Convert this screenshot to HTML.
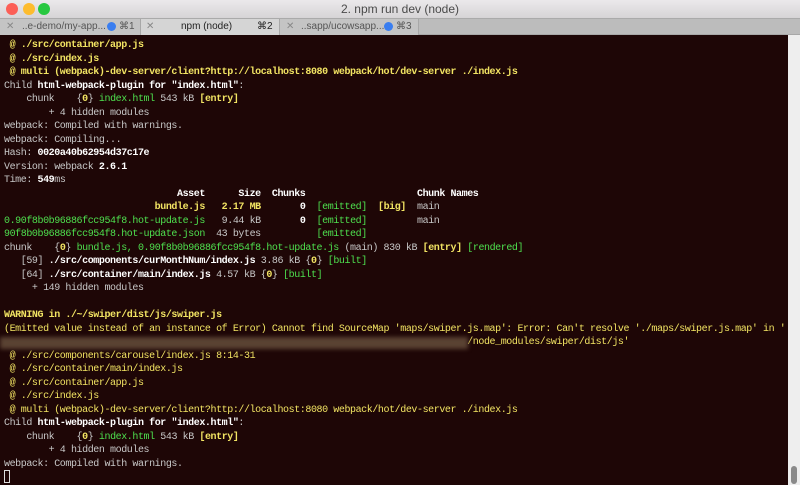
<!DOCTYPE html>
<html><head><meta charset="utf-8"><style>
*{margin:0;padding:0;box-sizing:border-box}
body{width:800px;height:485px;overflow:hidden;background:#1e0606;position:relative;font-family:"Liberation Sans",sans-serif}
#title{position:absolute;left:0;top:0;width:800px;height:18px;background:linear-gradient(#ebe9eb,#d6d4d6);text-align:center;font-size:12px;line-height:18px;color:#4a4a4a}
.tl{position:absolute;top:3px;width:12px;height:12px;border-radius:50%}
#tabs{position:absolute;left:0;top:18px;width:800px;height:17px;background:#bcbcbc;border-top:1px solid #aaa;border-bottom:1px solid #a8a8a8}
.tab{position:absolute;top:0;height:16px;font-size:10px;line-height:15px;color:#555;border-right:1px solid #a8a8a8;background:#c4c4c4}
.tab span{position:absolute;top:0}
.dot{display:inline-block;width:9px;height:9px;border-radius:50%;background:#3a7ef0;position:absolute;top:3px}
pre{position:absolute;left:4px;top:39px;font-family:"Liberation Mono",monospace;font-size:10px;letter-spacing:-0.42px;line-height:13.5px;color:#c8c8c8;white-space:pre}
.y{color:#f2e463}.yb{color:#f2e463;font-weight:bold}.g{color:#4ee04e}.w{color:#fff;font-weight:bold}
#blur{position:absolute;left:0;top:337px;width:468px;height:12px;background:#5a4232;filter:blur(2px)}
#sb{position:absolute;left:788px;top:35px;width:12px;height:450px;background:#eeeeee}
#thumb{position:absolute;left:791px;top:466px;width:6px;height:18px;border-radius:3px;background:#8a8a8a}
#cur{position:absolute;left:4px;top:470px;width:6px;height:13px;border:1px solid #ddd}
</style></head><body>
<div id="title">2. npm run dev (node)
<div class="tl" style="left:6px;background:#fc5f57"></div>
<div class="tl" style="left:23px;background:#fdbc2e"></div>
<div class="tl" style="left:38px;background:#28c840"></div>
</div>
<div id="tabs">
<div class="tab" style="left:0;width:141px"><span style="left:6px;color:#888">✕</span><span style="left:22px">..e-demo/my-app...</span><i class="dot" style="left:107px"></i><span style="left:119px">⌘1</span></div>
<div class="tab" style="left:141px;width:139px;background:#d5d5d5"><span style="left:5px;color:#888">✕</span><span style="left:40px;color:#222">npm (node)</span><span style="left:116px;color:#222">⌘2</span></div>
<div class="tab" style="left:280px;width:139px"><span style="left:6px;color:#888">✕</span><span style="left:21px">..sapp/ucowsapp...</span><i class="dot" style="left:104px"></i><span style="left:116px">⌘3</span></div>
</div>
<pre><span class="yb"> @ ./src/container/app.js
 @ ./src/index.js
 @ multi (webpack)-dev-server/client?http://localhost:8080 webpack/hot/dev-server ./index.js</span>
Child <span class="w">html-webpack-plugin for "index.html"</span>:
    chunk    {<span class="yb">0</span>} <span class="g">index.html</span> 543 kB <span class="yb">[entry]</span>
        + 4 hidden modules
webpack: Compiled with warnings.
webpack: Compiling...
Hash: <span class="w">0020a40b62954d37c17e</span>
Version: webpack <span class="w">2.6.1</span>
Time: <span class="w">549</span>ms
<span class="w">                               Asset      Size  Chunks                    Chunk Names</span>
<span class="yb">                           bundle.js   2.17 MB</span>       <span class="w">0</span>  <span class="g">[emitted]</span>  <span class="yb">[big]</span>  main
<span class="g">0.90f8b0b96886fcc954f8.hot-update.js</span>   9.44 kB       <span class="w">0</span>  <span class="g">[emitted]</span>         main
<span class="g">90f8b0b96886fcc954f8.hot-update.json</span>  43 bytes          <span class="g">[emitted]</span>
chunk    {<span class="yb">0</span>} <span class="g">bundle.js, 0.90f8b0b96886fcc954f8.hot-update.js</span> (main) 830 kB <span class="yb">[entry]</span> <span class="g">[rendered]</span>
   [59] <span class="w">./src/components/curMonthNum/index.js</span> 3.86 kB {<span class="yb">0</span>} <span class="g">[built]</span>
   [64] <span class="w">./src/container/main/index.js</span> 4.57 kB {<span class="yb">0</span>} <span class="g">[built]</span>
     + 149 hidden modules

<span class="yb">WARNING in ./~/swiper/dist/js/swiper.js</span>
<span class="y">(Emitted value instead of an instance of Error) Cannot find SourceMap 'maps/swiper.js.map': Error: Can't resolve './maps/swiper.js.map' in '
                                                                                   /node_modules/swiper/dist/js'
 @ ./src/components/carousel/index.js 8:14-31
 @ ./src/container/main/index.js
 @ ./src/container/app.js
 @ ./src/index.js
 @ multi (webpack)-dev-server/client?http://localhost:8080 webpack/hot/dev-server ./index.js</span>
Child <span class="w">html-webpack-plugin for "index.html"</span>:
    chunk    {<span class="yb">0</span>} <span class="g">index.html</span> 543 kB <span class="yb">[entry]</span>
        + 4 hidden modules
webpack: Compiled with warnings.</pre>
<div id="blur"></div>
<div id="cur"></div>
<div id="sb"></div>
<div id="thumb"></div>
</body></html>
